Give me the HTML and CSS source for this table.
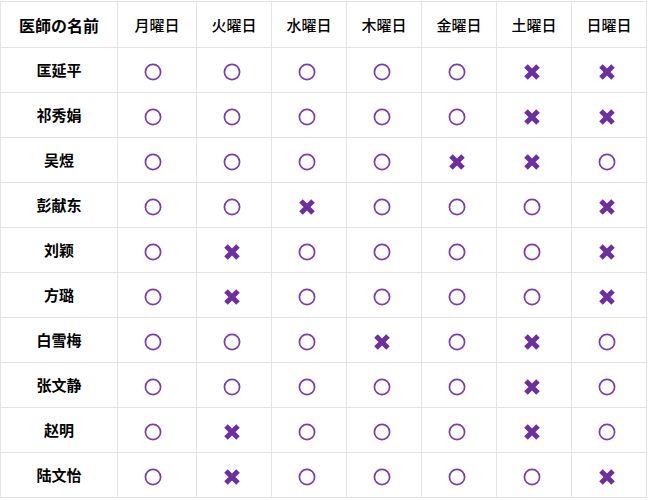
FILE: index.html
```html
<!DOCTYPE html>
<html lang="zh">
<head>
<meta charset="utf-8">
<title>医師の勤務表</title>
<link rel="stylesheet" href="styles.css">
</head>
<body>
<svg class="defs" width="0" height="0" aria-hidden="true">
  <symbol id="ok" viewBox="0 0 18 18"><circle cx="9" cy="9" r="7.6" fill="none" stroke="#7a3cb0" stroke-width="1.7"/></symbol>
  <symbol id="ng" viewBox="0 0 16 16"><path d="M2 2L14 14M14 2L2 14" stroke="#6c2ea0" stroke-width="5" fill="none"/></symbol>
</svg>
<table class="schedule">
  <colgroup>
    <col class="c-name"><col class="c-first"><col class="c-day"><col class="c-day"><col class="c-day"><col class="c-day"><col class="c-day"><col class="c-day">
  </colgroup>
  <thead>
    <tr><th class="h-name">医師の名前</th><th>月曜日</th><th>火曜日</th><th>水曜日</th><th>木曜日</th><th>金曜日</th><th>土曜日</th><th>日曜日</th></tr>
  </thead>
  <tbody>
    <tr><th>匡延平</th><td><svg class="o"><use href="#ok"/></svg></td><td><svg class="o"><use href="#ok"/></svg></td><td><svg class="o"><use href="#ok"/></svg></td><td><svg class="o"><use href="#ok"/></svg></td><td><svg class="o"><use href="#ok"/></svg></td><td><svg class="x"><use href="#ng"/></svg></td><td><svg class="x"><use href="#ng"/></svg></td></tr>
    <tr><th>祁秀娟</th><td><svg class="o"><use href="#ok"/></svg></td><td><svg class="o"><use href="#ok"/></svg></td><td><svg class="o"><use href="#ok"/></svg></td><td><svg class="o"><use href="#ok"/></svg></td><td><svg class="o"><use href="#ok"/></svg></td><td><svg class="x"><use href="#ng"/></svg></td><td><svg class="x"><use href="#ng"/></svg></td></tr>
    <tr><th>吴煜</th><td><svg class="o"><use href="#ok"/></svg></td><td><svg class="o"><use href="#ok"/></svg></td><td><svg class="o"><use href="#ok"/></svg></td><td><svg class="o"><use href="#ok"/></svg></td><td><svg class="x"><use href="#ng"/></svg></td><td><svg class="x"><use href="#ng"/></svg></td><td><svg class="o"><use href="#ok"/></svg></td></tr>
    <tr><th>彭献东</th><td><svg class="o"><use href="#ok"/></svg></td><td><svg class="o"><use href="#ok"/></svg></td><td><svg class="x"><use href="#ng"/></svg></td><td><svg class="o"><use href="#ok"/></svg></td><td><svg class="o"><use href="#ok"/></svg></td><td><svg class="o"><use href="#ok"/></svg></td><td><svg class="x"><use href="#ng"/></svg></td></tr>
    <tr><th>刘颖</th><td><svg class="o"><use href="#ok"/></svg></td><td><svg class="x"><use href="#ng"/></svg></td><td><svg class="o"><use href="#ok"/></svg></td><td><svg class="o"><use href="#ok"/></svg></td><td><svg class="o"><use href="#ok"/></svg></td><td><svg class="o"><use href="#ok"/></svg></td><td><svg class="x"><use href="#ng"/></svg></td></tr>
    <tr><th>方璐</th><td><svg class="o"><use href="#ok"/></svg></td><td><svg class="x"><use href="#ng"/></svg></td><td><svg class="o"><use href="#ok"/></svg></td><td><svg class="o"><use href="#ok"/></svg></td><td><svg class="o"><use href="#ok"/></svg></td><td><svg class="o"><use href="#ok"/></svg></td><td><svg class="x"><use href="#ng"/></svg></td></tr>
    <tr><th>白雪梅</th><td><svg class="o"><use href="#ok"/></svg></td><td><svg class="o"><use href="#ok"/></svg></td><td><svg class="o"><use href="#ok"/></svg></td><td><svg class="x"><use href="#ng"/></svg></td><td><svg class="o"><use href="#ok"/></svg></td><td><svg class="x"><use href="#ng"/></svg></td><td><svg class="o"><use href="#ok"/></svg></td></tr>
    <tr><th>张文静</th><td><svg class="o"><use href="#ok"/></svg></td><td><svg class="o"><use href="#ok"/></svg></td><td><svg class="o"><use href="#ok"/></svg></td><td><svg class="o"><use href="#ok"/></svg></td><td><svg class="o"><use href="#ok"/></svg></td><td><svg class="x"><use href="#ng"/></svg></td><td><svg class="o"><use href="#ok"/></svg></td></tr>
    <tr><th>赵明</th><td><svg class="o"><use href="#ok"/></svg></td><td><svg class="x"><use href="#ng"/></svg></td><td><svg class="o"><use href="#ok"/></svg></td><td><svg class="o"><use href="#ok"/></svg></td><td><svg class="o"><use href="#ok"/></svg></td><td><svg class="x"><use href="#ng"/></svg></td><td><svg class="o"><use href="#ok"/></svg></td></tr>
    <tr><th>陆文怡</th><td><svg class="o"><use href="#ok"/></svg></td><td><svg class="x"><use href="#ng"/></svg></td><td><svg class="o"><use href="#ok"/></svg></td><td><svg class="o"><use href="#ok"/></svg></td><td><svg class="o"><use href="#ok"/></svg></td><td><svg class="o"><use href="#ok"/></svg></td><td><svg class="x"><use href="#ng"/></svg></td></tr>
  </tbody>
</table>
</body>
</html>
```

FILE: styles.css
```css
html, body {
  margin: 0;
  padding: 0;
  background: #ffffff;
}

body {
  padding-top: 1px;
  font-family: "Noto Sans CJK SC", "Noto Sans CJK JP", sans-serif;
  color: #000000;
}

.defs {
  position: absolute;
  width: 0;
  height: 0;
  overflow: hidden;
}

.schedule {
  border-collapse: collapse;
  table-layout: fixed;
  width: 647px;
}

.c-name { width: 117px; }
.c-first { width: 79px; }
.c-day { width: 75px; }

.schedule th,
.schedule td {
  border: 1px solid #e3e3e3;
  padding: 0;
  text-align: center;
  vertical-align: middle;
  height: 44px;
}

.schedule thead th {
  height: 45px;
  font-size: 15px;
  font-weight: 500;
  line-height: 20px;
}

.schedule thead th.h-name {
  font-size: 16px;
  font-weight: 700;
}

.schedule tbody th {
  font-size: 15px;
  font-weight: 700;
  line-height: 20px;
}

.schedule td {
  height: 40px;
  padding-top: 4px;
  padding-right: 5px;
  line-height: 0;
}

.schedule td:nth-child(2) {
  padding-right: 9px;
}

.o {
  width: 18px;
  height: 18px;
  display: inline-block;
}

.x {
  width: 16px;
  height: 16px;
  display: inline-block;
}
```
